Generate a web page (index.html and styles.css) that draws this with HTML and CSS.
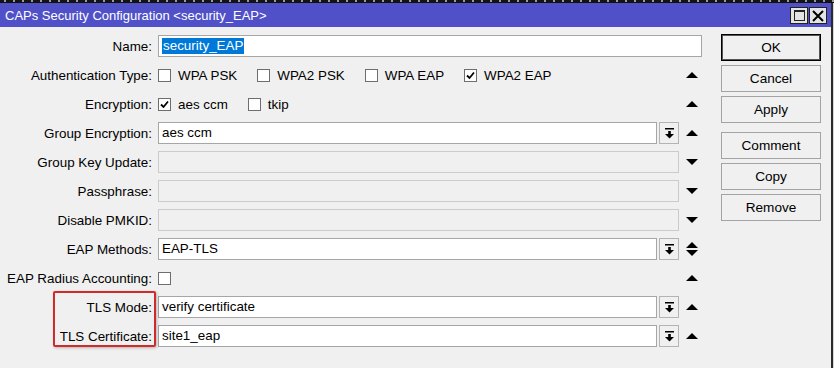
FILE: index.html
```html
<!DOCTYPE html>
<html lang="en">
<head>
    <meta charset="UTF-8">
    <title>CAPs Security Configuration</title>
    <link rel="stylesheet" href="styles.css">
</head>
<body>
    <div class="desk"></div>
    <div class="window">
        <div class="titlebar">
            <span class="title">CAPs Security Configuration &lt;security_EAP&gt;</span>
            <div class="winbtns">
                <span class="wbtn"><span class="maxbox"></span></span>
                <span class="wbtn">
                    <svg width="12" height="12" viewBox="0 0 12 12"><path d="M1 1 L11 11 M11 1 L1 11" stroke="#000" stroke-width="2"/></svg>
                </span>
            </div>
        </div>

        <div class="content">
            <div class="form">
                <div class="row">
                    <label class="lbl">Name:</label>
                    <div class="ctl">
                        <div class="input"><span class="sel">security_EAP</span></div>
                    </div>
                </div>

                <div class="row">
                    <label class="lbl">Authentication Type:</label>
                    <div class="ctl">
                        <div class="checks">
                            <span class="opt"><span class="chk"></span>WPA PSK</span>
                            <span class="opt"><span class="chk"></span>WPA2 PSK</span>
                            <span class="opt"><span class="chk"></span>WPA EAP</span>
                            <span class="opt"><span class="chk on"><svg width="11" height="11" viewBox="0 0 11 11"><path d="M2 5.5 L4.5 8 L9 2.5" fill="none" stroke="#000" stroke-width="1.8"/></svg></span>WPA2 EAP</span>
                        </div>
                        <span class="arrow"><span class="up"></span></span>
                    </div>
                </div>

                <div class="row">
                    <label class="lbl">Encryption:</label>
                    <div class="ctl">
                        <div class="checks">
                            <span class="opt"><span class="chk on"><svg width="11" height="11" viewBox="0 0 11 11"><path d="M2 5.5 L4.5 8 L9 2.5" fill="none" stroke="#000" stroke-width="1.8"/></svg></span>aes ccm</span>
                            <span class="opt"><span class="chk"></span>tkip</span>
                        </div>
                        <span class="arrow"><span class="up"></span></span>
                    </div>
                </div>

                <div class="row">
                    <label class="lbl">Group Encryption:</label>
                    <div class="ctl">
                        <div class="input">aes ccm</div>
                        <span class="dd"><svg width="9" height="11" viewBox="0 0 9 11"><rect x="0" y="0" width="9" height="1.5"/><rect x="3.2" y="3" width="2.6" height="3"/><path d="M0 6 L9 6 L4.5 10.5Z"/></svg></span>
                        <span class="arrow"><span class="up"></span></span>
                    </div>
                </div>

                <div class="row">
                    <label class="lbl">Group Key Update:</label>
                    <div class="ctl">
                        <div class="input off"></div>
                        <span class="arrow"><span class="down"></span></span>
                    </div>
                </div>

                <div class="row">
                    <label class="lbl">Passphrase:</label>
                    <div class="ctl">
                        <div class="input off"></div>
                        <span class="arrow"><span class="down"></span></span>
                    </div>
                </div>

                <div class="row">
                    <label class="lbl">Disable PMKID:</label>
                    <div class="ctl">
                        <div class="input off"></div>
                        <span class="arrow"><span class="down"></span></span>
                    </div>
                </div>

                <div class="row">
                    <label class="lbl">EAP Methods:</label>
                    <div class="ctl">
                        <div class="input">EAP-TLS</div>
                        <span class="dd"><svg width="9" height="11" viewBox="0 0 9 11"><rect x="0" y="0" width="9" height="1.5"/><rect x="3.2" y="3" width="2.6" height="3"/><path d="M0 6 L9 6 L4.5 10.5Z"/></svg></span>
                        <span class="arrow updown"><span class="up"></span><span class="down"></span></span>
                    </div>
                </div>

                <div class="row">
                    <label class="lbl">EAP Radius Accounting:</label>
                    <div class="ctl">
                        <div class="checks">
                            <span class="opt"><span class="chk"></span></span>
                        </div>
                        <span class="arrow"><span class="up"></span></span>
                    </div>
                </div>

                <div class="row">
                    <label class="lbl">TLS Mode:</label>
                    <div class="ctl">
                        <div class="input">verify certificate</div>
                        <span class="dd"><svg width="9" height="11" viewBox="0 0 9 11"><rect x="0" y="0" width="9" height="1.5"/><rect x="3.2" y="3" width="2.6" height="3"/><path d="M0 6 L9 6 L4.5 10.5Z"/></svg></span>
                        <span class="arrow"><span class="up"></span></span>
                    </div>
                </div>

                <div class="row">
                    <label class="lbl">TLS Certificate:</label>
                    <div class="ctl">
                        <div class="input">site1_eap</div>
                        <span class="dd"><svg width="9" height="11" viewBox="0 0 9 11"><rect x="0" y="0" width="9" height="1.5"/><rect x="3.2" y="3" width="2.6" height="3"/><path d="M0 6 L9 6 L4.5 10.5Z"/></svg></span>
                        <span class="arrow"><span class="up"></span></span>
                    </div>
                </div>

                <div class="callout"></div>
            </div>

            <div class="actions">
                <button class="btn default">OK</button>
                <button class="btn">Cancel</button>
                <button class="btn">Apply</button>
                <button class="btn spaced">Comment</button>
                <button class="btn">Copy</button>
                <button class="btn">Remove</button>
            </div>
        </div>
    </div>
</body>
</html>
```

FILE: styles.css
```css
body {
    margin: 0;
    width: 834px;
    height: 368px;
    overflow: hidden;
    background: #d6d6d6;
    font-family: "Liberation Sans", Arial, sans-serif;
    font-size: 13.4px;
    color: #000;
}
.desk {
    height: 3px;
    background: repeating-linear-gradient(90deg, #141414 0 4px, #9a9a9a 4px 6px, #141414 6px 9px);
    border-bottom: 1px solid #111;
    box-sizing: border-box;
}
.window {
    width: 831px;
    height: 365px;
    background: #f0f0f0;
    border-right: 2px solid #2b2b2b;
}
.titlebar {
    height: 24px;
    background: #5050c8;
    display: flex;
    align-items: center;
    padding-left: 5px;
}
.title {
    color: #fff;
    font-size: 13px;
    flex: 1;
}
.winbtns {
    display: flex;
    gap: 1px;
    margin-right: 4px;
    margin-top: 1px;
}
.wbtn {
    width: 18px;
    height: 17px;
    box-sizing: border-box;
    background: #e4e4e4;
    border: 1px solid #222;
    display: flex;
    align-items: center;
    justify-content: center;
}
.maxbox {
    width: 11px;
    height: 11px;
    box-sizing: border-box;
    border: 1px solid #222;
    border-top-width: 2px;
}
.content {
    display: flex;
}
.form {
    position: relative;
    width: 702px;
    padding-top: 8px;
}
.row {
    display: flex;
    align-items: center;
    height: 22px;
    margin-bottom: 7px;
}
.lbl {
    width: 152px;
    text-align: right;
    margin-right: 6px;
    white-space: nowrap;
}
.ctl {
    width: 544px;
    height: 22px;
    display: flex;
    align-items: center;
}
.input {
    flex: 1;
    height: 22px;
    box-sizing: border-box;
    background: #fff;
    border: 1px solid #a6a6a6;
    padding: 0 3px;
    line-height: 20px;
    white-space: nowrap;
}
.input.off {
    background: #f0f0f0;
    border-color: #cbcbcb;
}
.sel {
    background: #0078d7;
    color: #fff;
    padding: 0 1px;
    display: inline-block;
    line-height: 16px;
}
.dd {
    width: 20px;
    height: 22px;
    box-sizing: border-box;
    margin-left: 2px;
    border: 1px solid #b4b4b4;
    background: #f0f0f0;
    display: flex;
    align-items: center;
    justify-content: center;
}
.checks {
    flex: 1;
    display: flex;
    align-items: center;
    gap: 20px;
}
.opt {
    display: flex;
    align-items: center;
    gap: 7px;
}
.chk {
    width: 13px;
    height: 13px;
    box-sizing: border-box;
    background: #fff;
    border: 1px solid #6e6e6e;
    display: flex;
    align-items: center;
    justify-content: center;
}
.arrow {
    width: 23px;
    box-sizing: border-box;
    padding-left: 7px;
    display: flex;
    flex-direction: column;
    align-items: flex-start;
    gap: 2px;
}
.up {
    width: 0;
    height: 0;
    border-left: 6px solid transparent;
    border-right: 6px solid transparent;
    border-bottom: 6px solid #000;
}
.down {
    width: 0;
    height: 0;
    border-left: 6px solid transparent;
    border-right: 6px solid transparent;
    border-top: 6px solid #000;
}
.callout {
    position: absolute;
    left: 53px;
    top: 264px;
    width: 103px;
    height: 56px;
    box-sizing: border-box;
    border: 2px solid #d12a2a;
    border-radius: 2px;
    box-shadow: 1px 1px 3px rgba(0, 0, 0, 0.25);
}
.actions {
    margin-left: 19px;
    padding-top: 7px;
    width: 100px;
    display: flex;
    flex-direction: column;
    gap: 4px;
}
.btn {
    height: 27px;
    width: 100px;
    background: #f0f0f0;
    border: 1px solid #a3a3a3;
    font-family: "Liberation Sans", Arial, sans-serif;
    font-size: 13.6px;
    color: #000;
    padding: 0;
}
.btn.default {
    border: 1px solid #000;
    box-shadow: inset 0 0 0 1px #555;
}
.btn.spaced {
    margin-top: 5px;
}
```
